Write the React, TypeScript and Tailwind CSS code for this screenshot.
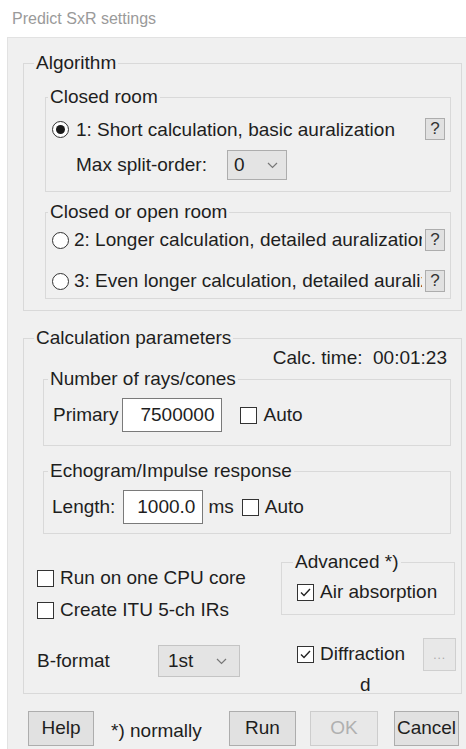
import { ReactNode } from "react";

const text = "text-[#1e1e1e]";

function Group({
    label,
    className,
    legendClass,
    children,
}: {
    label: string;
    className: string;
    legendClass?: string;
    children: ReactNode;
}) {
    return (
        <fieldset className={`border border-[#d9d9d9] ${className}`}>
            <legend className={`px-[2px] leading-[22px] ${legendClass ?? ""}`}>
                {label}
            </legend>
            {children}
        </fieldset>
    );
}

function Radio({ checked }: { checked?: boolean }) {
    return (
        <span className="w-[17px] h-[17px] rounded-full border border-[#333] bg-white flex items-center justify-center shrink-0">
            {checked && <span className="w-[9px] h-[9px] rounded-full bg-[#1a1a1a]" />}
        </span>
    );
}

function Check({ checked }: { checked?: boolean }) {
    return (
        <span className="w-[17px] h-[17px] border border-[#333] bg-white flex items-center justify-center shrink-0">
            {checked && (
                <svg width="13" height="13" viewBox="0 0 13 13">
                    <polyline
                        points="2,6.5 5,9.5 11,3"
                        fill="none"
                        stroke="#222"
                        strokeWidth="1.4"
                    />
                </svg>
            )}
        </span>
    );
}

function Help() {
    return (
        <span className="w-[20px] h-[22px] border border-[#adadad] bg-[#e1e1e1] flex items-center justify-center text-[17px] text-[#333] shrink-0">
            ?
        </span>
    );
}

function Chevron() {
    return (
        <svg width="11" height="7" viewBox="0 0 11 7">
            <polyline points="1,1 5.5,5.5 10,1" fill="none" stroke="#777" strokeWidth="1.2" />
        </svg>
    );
}

function Button({ label, disabled, className }: { label: string; disabled?: boolean; className: string }) {
    return (
        <div
            className={`h-[35px] flex items-center justify-center border ${
                disabled
                    ? "border-[#cdcdcd] bg-[#e8e8e8] text-[#b0b0b0]"
                    : "border-[#adadad] bg-[#e1e1e1] text-[#1e1e1e]"
            } ${className}`}
        >
            {label}
        </div>
    );
}

export default function App() {
    return (
        <div
            className={`w-[466px] h-[749px] bg-white overflow-hidden text-[19px] ${text}`}
            style={{ fontFamily: '"Liberation Sans", Arial, sans-serif' }}
        >
            <div className="h-[37px] pl-[12px] pt-[8px] text-[16px] leading-[22px] text-[#9a9a9a]">
                Predict SxR settings
            </div>
            <div className="ml-[7px] w-[459px] h-[712px] bg-[#f0f0f0] border-l border-t border-[#e2e2e2] pl-[15px]">
                {/* Algorithm */}
                <Group label="Algorithm" className="mt-[14px] w-[439px] pl-[10px] pb-[11px]">
                    <Group label="Closed room" className="mt-[12px] ml-[11px] w-[406px] pl-[2px] pb-[11px]">
                        <div className="h-[42px] flex items-center ml-[4px]">
                            <Radio checked />
                            <span className="ml-[7px] leading-none">1: Short calculation, basic auralization</span>
                            <span className="ml-auto mr-[5px]">
                                <Help />
                            </span>
                        </div>
                        <div className="h-[30px] flex items-center">
                            <span className="ml-[28px] w-[151px]">Max split-order:</span>
                            <div className="h-[30px] w-[60px] border border-[#adadad] bg-[#e4e4e4] flex items-center pl-[6px] pr-[8px]">
                                <span>0</span>
                                <span className="ml-auto">
                                    <Chevron />
                                </span>
                            </div>
                        </div>
                    </Group>
                    <Group label="Closed or open room" className="mt-[9px] ml-[11px] w-[406px] pl-[2px]">
                        <div className="h-[34px] flex items-center ml-[4px]">
                            <Radio />
                            <span className="ml-[5px] w-[348px] whitespace-nowrap overflow-hidden">
                                2: Longer calculation, detailed auralization
                            </span>
                            <span className="ml-auto mr-[5px]">
                                <Help />
                            </span>
                        </div>
                        <div className="h-[34px] mt-[7px] flex items-center ml-[4px]">
                            <Radio />
                            <span className="ml-[5px] w-[348px] whitespace-nowrap overflow-hidden">
                                3: Even longer calculation, detailed auralization
                            </span>
                            <span className="ml-auto mr-[5px]">
                                <Help />
                            </span>
                        </div>
                    </Group>
                </Group>

                {/* Calculation parameters */}
                <Group label="Calculation parameters" className="mt-[16px] w-[439px] h-[367px] pl-[10px]">
                    <div className="h-[18px] leading-[18px] text-right pr-[14px] whitespace-pre">
                        Calc. time:  00:01:23
                    </div>
                    <Group label="Number of rays/cones" className="mt-[1px] ml-[9px] w-[408px] pl-[4px] pb-[13px]">
                        <div className="mt-[8px] h-[34px] flex items-center ml-[5px]">
                            <span>Primary</span>
                            <div className="ml-[4px] w-[100px] h-[34px] border border-[#7a7a7a] bg-white flex items-center justify-end pr-[7px]">
                                7500000
                            </div>
                            <span className="ml-[18px]">
                                <Check />
                            </span>
                            <span className="ml-[6px]">Auto</span>
                        </div>
                    </Group>
                    <Group label="Echogram/Impulse response" className="mt-[14px] ml-[9px] w-[408px] pl-[4px] pb-[9px]">
                        <div className="mt-[8px] h-[34px] flex items-center ml-[4px]">
                            <span>Length:</span>
                            <div className="ml-[8px] w-[80px] h-[34px] border border-[#7a7a7a] bg-white flex items-center justify-end pr-[7px]">
                                1000.0
                            </div>
                            <span className="ml-[5px]">ms</span>
                            <span className="ml-[8px]">
                                <Check />
                            </span>
                            <span className="ml-[6px]">Auto</span>
                        </div>
                    </Group>

                    <div className="flex">
                        <div className="w-[244px] ml-[3px]">
                            <div className="mt-[28px] h-[32px] flex items-center">
                                <Check />
                                <span className="ml-[6px]">Run on one CPU core</span>
                            </div>
                            <div className="h-[32px] flex items-center">
                                <Check />
                                <span className="ml-[6px]">Create ITU 5-ch IRs</span>
                            </div>
                            <div className="mt-[19px] h-[32px] flex items-center">
                                <span className="w-[121px]">B-format</span>
                                <div className="h-[32px] w-[82px] border border-[#c4c4c4] bg-[#e4e4e4] flex items-center pl-[9px] pr-[12px]">
                                    <span>1st</span>
                                    <span className="ml-auto">
                                        <Chevron />
                                    </span>
                                </div>
                            </div>
                        </div>
                        <div>
                            <Group label="Advanced *)" className="mt-[17px] w-[174px] pl-[11px] pb-[6px]">
                                <div className="mt-[3px] h-[32px] flex items-center ml-[4px]">
                                    <Check checked />
                                    <span className="ml-[6px]">Air absorption</span>
                                </div>
                            </Group>
                            <div className="mt-[23px] h-[33px] flex items-center ml-[16px]">
                                <Check checked />
                                <span className="ml-[6px]">Diffraction</span>
                                <div className="ml-[18px] w-[33px] h-[33px] border border-[#cfcfcf] bg-[#e8e8e8] flex items-center justify-center text-[12px] text-[#aaa] tracking-[1px]">
                                    ...
                                </div>
                            </div>
                            <div className="mt-[4px] h-[20px] leading-[20px] pl-[79px]">d</div>
                        </div>
                    </div>
                </Group>

                {/* Dialog buttons */}
                <div className="mt-[17px] flex items-end ml-[5px]">
                    <Button label="Help" className="w-[66px]" />
                    <span className="ml-[17px] mb-[1px] w-[118px]">*) normally</span>
                    <Button label="Run" className="w-[67px]" />
                    <Button label="OK" disabled className="ml-[14px] w-[68px]" />
                    <Button label="Cancel" className="ml-[16px] w-[65px]" />
                </div>
            </div>
        </div>
    );
}
